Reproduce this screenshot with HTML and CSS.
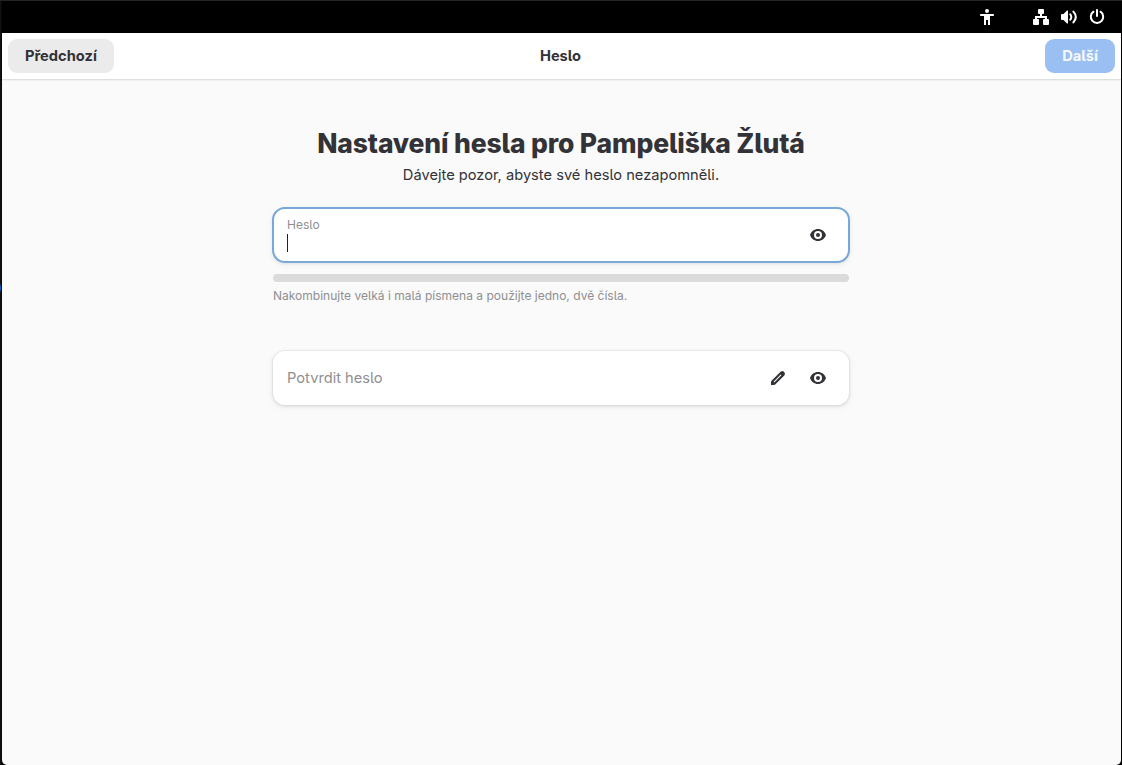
FILE: index.html
```
<!DOCTYPE html>
<html lang="cs">
<head>
<meta charset="utf-8">
<title>Heslo</title>
<link rel="stylesheet" href="styles.css">
</head>
<body>
<svg class="defs" width="0" height="0">
  <symbol id="eye" viewBox="0 0 16 16"><path fill-rule="evenodd" d="M8 2C4.400 2 1.200 4.300 0 8c1.200 3.700 4.400 6 8 6s6.800-2.300 8-6C14.800 4.300 11.600 2 8 2zm0 2a4 4 0 1 1 0 8 4 4 0 0 1 0-8z"/><circle cx="8" cy="8" r="2"/></symbol>
</svg>
<div class="screen">
  <div class="topbar">
    <svg class="icon access" viewBox="0 0 16 16"><circle cx="8" cy="2" r="2"/><path d="M1.700 5h12.600a.7.700 0 0 1 .7.700v.6a.7.700 0 0 1-.7.700H11v9H9v-5H7v5H5V7H1.700a.7.700 0 0 1-.7-.7v-.6a.7.700 0 0 1 .7-.7z"/></svg>
    <svg class="icon" viewBox="0 0 16 16"><path d="M6 0h4q1 0 1 1v3q0 1-1 1H9v2h5v3h1q1 0 1 1v4q0 1-1 1h-4q-1 0-1-1v-4q0-1 1-1h1V9H4v1h1q1 0 1 1v4q0 1-1 1H1q-1 0-1-1v-4q0-1 1-1h1V7h5V5H6Q5 5 5 4V1q0-1 1-1z"/></svg>
    <svg class="icon" viewBox="0 0 16 16"><path d="M6 1.500h1v13H6L2.500 11H1q-1 0-1-1V6q0-1 1-1h1.500z"/><path class="line" d="M9.300 5.300q2 2.700 0 5.400M12.400 2.600q4.800 5.400 0 10.800"/></svg>
    <svg class="icon" viewBox="0 0 16 16"><path class="line" d="M8 1v6M4.500 2.700a6.200 6.200 0 1 0 7 0"/></svg>
  </div>
  <div class="window">
    <header class="header">
      <button class="btn">Předchozí</button>
      <div class="heading">Heslo</div>
      <button class="btn next">Další</button>
    </header>
    <main class="content">
      <h1 class="title">Nastavení hesla pro Pampeliška Žlutá</h1>
      <p class="subtitle">Dávejte pozor, abyste své heslo nezapomněli.</p>
      <div class="field focused">
        <div class="entry"><span class="label">Heslo</span><span class="caret"></span></div>
        <svg class="icon"><use href="#eye"/></svg>
      </div>
      <div class="strength"></div>
      <p class="hint">Nakombinujte velká i malá písmena a použijte jedno, dvě čísla.</p>
      <div class="field">
        <div class="entry placeholder">Potvrdit heslo</div>
        <svg class="icon" viewBox="0 0 16 16"><path fill-rule="evenodd" d="M10.600 1.700q1.500-1.300 3-.2l.9.900q1.100 1.500-.2 3L5.200 14.500 4 15H1v-3l.5-1.200zM10.700 4.600L3.800 11.500v.7h.7l6.900-6.900z"/></svg>
        <svg class="icon"><use href="#eye"/></svg>
      </div>
    </main>
  </div>
</div>
</body>
</html>
```
FILE: styles.css
```
* { box-sizing: border-box; }
body {
  margin: 0;
  background: #000;
  color: #323237;
  font: 14.667px/20px Inter, "Noto Sans", sans-serif;
  font-feature-settings: "cv05";
}
.defs { position: absolute; }
.screen {
  height: 765px;
  padding: 0 1px 0 2px;
  border-top: 1px solid #242424;
  display: flex;
  flex-direction: column;
  background: linear-gradient(#0000, #1269e0 50%, #0000) 0 282px / 1px 10px no-repeat, linear-gradient(90deg, #111 1px, #000 2px);
}
.topbar {
  height: 32px;
  flex: none;
  background: #000;
  color: #fff;
  display: flex;
  align-items: center;
  justify-content: flex-end;
  gap: 12px;
  padding-right: 16px;
}
.icon { width: 16px; height: 16px; flex: none; fill: currentColor; }
.line { fill: none; stroke: currentColor; stroke-width: 2; stroke-linecap: round; }
.access { margin-right: 26px; }
.window {
  flex: 1;
  background: #fafafa;
  border-radius: 0 0 5px 5px;
}
.header {
  height: 47px;
  padding: 0 6px;
  background: #fff;
  border-bottom: 1px solid #dfdfdf;
  box-shadow: 0 1px 1px #00000008;
  display: grid;
  grid-template-columns: 1fr auto 1fr;
  align-items: center;
  font-weight: 700;
}
.heading { padding-right: 2px; }
.btn {
  height: 34px;
  padding: 0 17px;
  border: 0;
  border-radius: 9px;
  background: #ebebeb;
  color: inherit;
  font: inherit;
  font-feature-settings: inherit;
  justify-self: start;
}
.next { background: #9ac0f3; color: #f6f9fe; justify-self: end; }
.content { width: 577px; margin: 0 auto; padding: 45px 1px 0 0; }
.title {
  margin: 0 -10px;
  font-size: 26.5px;
  line-height: 36px;
  font-weight: 800;
  letter-spacing: -.15px;
  text-align: center;
  white-space: nowrap;
}
.subtitle { margin: 4px 0 23px; text-align: center; }
.field {
  height: 54px;
  border-radius: 12px;
  background: #fff;
  box-shadow: 0 0 0 1px #00000008, 0 1px 3px 1px #00000012, 0 2px 6px 2px #00000008;
  display: flex;
  align-items: center;
  gap: 24px;
  padding: 0 23px 0 14px;
}
.focused { outline: 2px solid #78a8da; outline-offset: -1px; }
.entry { flex: 1; display: flex; flex-direction: column; }
.placeholder { color: #8f8f91; }
.label { font-size: 12px; line-height: 16px; color: #8f8f91; }
.caret { width: 1px; height: 18px; margin: 1px 0 2px; background: #202024; }
.strength { height: 8px; margin-top: 12px; border-radius: 4px; background: #dbdbdb; }
.hint { margin: 5px 0 47px; font-size: 12.03px; line-height: 17px; color: #8f8f91; }
```
